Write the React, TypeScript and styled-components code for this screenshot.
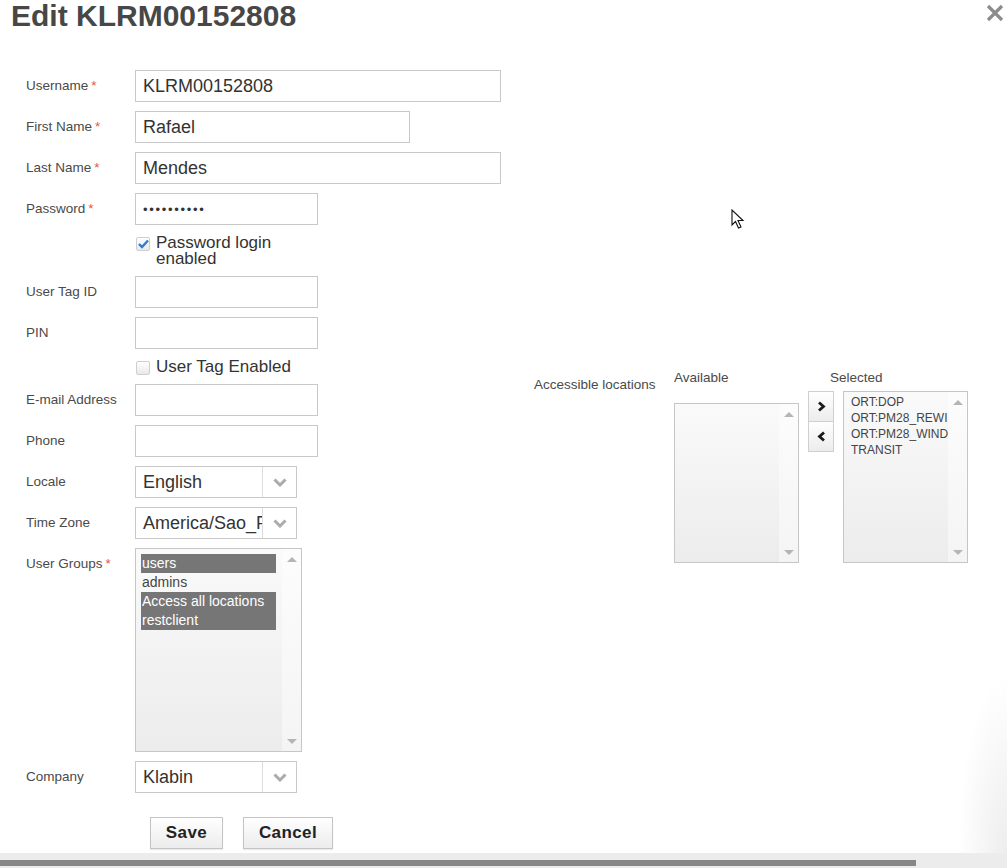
import styled, { createGlobalStyle } from 'styled-components'

const GlobalStyle = createGlobalStyle`
  html, body {
    margin: 0;
    padding: 0;
    background: #fff;
    font-family: Arial, "Liberation Sans", sans-serif;
    overflow: hidden;
  }
`

const Page = styled.div`
  position: relative;
  width: 1007px;
  height: 868px;
  background: #fff;
  overflow: hidden;
`

const Header = styled.div`
  display: flex;
  justify-content: space-between;
  align-items: flex-start;
  padding: 0 3px 0 11px;
  height: 70px;
`

const Title = styled.h1`
  margin: 0;
  font-size: 30px;
  line-height: 32px;
  font-weight: bold;
  color: #474747;
`

const CloseBtn = styled.button`
  border: 0;
  background: none;
  padding: 0;
  margin-top: 4px;
  width: 18px;
  height: 18px;
  cursor: pointer;
`

const Body = styled.div`
  display: flex;
  align-items: flex-start;
`

const Form = styled.div`
  display: flex;
  flex-direction: column;
  gap: 9px;
  padding-left: 26px;
  width: 508px;
  flex-shrink: 0;
`

const Row = styled.div`
  display: grid;
  grid-template-columns: 109px auto;
  align-items: start;
`

const Label = styled.div`
  font-size: 13.5px;
  line-height: 32px;
  color: #4a4a4a;
`

const Req = styled.span`
  color: #e5533d;
  margin-left: 3px;
`

const TextInput = styled.div<{ $w: number }>`
  box-sizing: border-box;
  width: ${(p) => p.$w}px;
  height: 32px;
  border: 1px solid #c9c9c9;
  background: #fff;
  padding: 0 7px;
  font-size: 18px;
  line-height: 30px;
  color: #333;
  white-space: nowrap;
  overflow: hidden;
`

const Dots = styled.span`
  font-size: 13px;
  letter-spacing: 1.7px;
  color: #333;
  position: relative;
  top: -1px;
`

const CheckRow = styled.label<{ $h: number }>`
  display: flex;
  align-items: flex-start;
  gap: 6px;
  height: ${(p) => p.$h}px;
  padding-top: 1px;
  box-sizing: border-box;
`

const Box = styled.span`
  box-sizing: border-box;
  width: 14px;
  height: 14px;
  margin: 2px 0 0 1px;
  border: 1px solid #cfcfcf;
  border-radius: 2px;
  background: linear-gradient(#fff, #e9e9e9);
  display: flex;
  align-items: center;
  justify-content: center;
  flex-shrink: 0;
`

const CheckText = styled.span<{ $wrap?: boolean }>`
  font-size: 17px;
  line-height: 16px;
  color: #333;
  max-width: ${(p) => (p.$wrap ? '150px' : 'none')};
  white-space: ${(p) => (p.$wrap ? 'normal' : 'nowrap')};
`

const Select = styled.div`
  box-sizing: border-box;
  display: flex;
  width: 162px;
  height: 32px;
  border: 1px solid #c9c9c9;
  background: #fff;
`

const SelectValue = styled.div`
  flex: 1;
  min-width: 0;
  padding: 0 7px;
  font-size: 18px;
  line-height: 30px;
  color: #333;
  white-space: nowrap;
  overflow: hidden;
`

const SelectArrow = styled.div`
  width: 33px;
  border-left: 1px solid #dcdcdc;
  display: flex;
  align-items: center;
  justify-content: center;
`

const ListBox = styled.div<{ $w: number; $h: number }>`
  box-sizing: border-box;
  width: ${(p) => p.$w}px;
  height: ${(p) => p.$h}px;
  border: 1px solid #c6c6c6;
  background: linear-gradient(#fafafa, #ececec);
  display: flex;
  overflow: hidden;
`

const ListItems = styled.div<{ $pad: string; $size: number; $lh: number }>`
  flex: 1;
  min-width: 0;
  padding: ${(p) => p.$pad};
  font-size: ${(p) => p.$size}px;
  line-height: ${(p) => p.$lh}px;
  color: #444;
  overflow: hidden;
`

const Item = styled.div<{ $sel?: boolean }>`
  white-space: nowrap;
  overflow: hidden;
  background: ${(p) => (p.$sel ? '#767676' : 'transparent')};
  color: ${(p) => (p.$sel ? '#fff' : 'inherit')};
  padding-left: 1px;
`

const ScrollTrack = styled.div`
  width: 19px;
  flex-shrink: 0;
  background: rgba(255, 255, 255, 0.45);
  display: flex;
  flex-direction: column;
  justify-content: space-between;
  align-items: center;
  padding: 8px 0 7px;
  box-sizing: border-box;
`

const Tri = styled.span<{ $up?: boolean }>`
  width: 0;
  height: 0;
  border-left: 5px solid transparent;
  border-right: 5px solid transparent;
  ${(p) => (p.$up ? 'border-bottom: 5px solid #b5b5b5;' : 'border-top: 5px solid #b5b5b5;')}
`

const Actions = styled.div`
  display: flex;
  gap: 20px;
  padding: 15px 0 0 124px;
`

const Button = styled.button<{ $w: number }>`
  box-sizing: border-box;
  width: ${(p) => p.$w}px;
  height: 32px;
  border: 1px solid #c4c4c4;
  background: linear-gradient(#ffffff, #ececec);
  box-shadow: 0 1px 1px rgba(0, 0, 0, 0.08);
  font-family: Arial, "Liberation Sans", sans-serif;
  font-size: 17px;
  font-weight: bold;
  letter-spacing: 0.4px;
  color: #222;
  padding: 0;
`

const Locations = styled.div`
  display: grid;
  grid-template-columns: 140px 125px 9px 26px 9px 125px;
  grid-template-rows: 22px auto;
  padding-top: 299px;
`

const LocLabel = styled.div`
  grid-row: 1 / span 2;
  font-size: 13.5px;
  line-height: 18px;
  color: #4a4a4a;
  padding-top: 7px;
`

const ColHead = styled.div<{ $pad?: number; $span?: boolean }>`
  font-size: 13.5px;
  line-height: 18px;
  color: #4a4a4a;
  padding-left: ${(p) => p.$pad || 0}px;
  grid-column: ${(p) => (p.$span ? '4 / span 3' : 'auto')};
`

const AvailBox = styled.div`
  grid-column: 2;
  grid-row: 2;
  padding-top: 12px;
`

const MoveButtons = styled.div`
  grid-column: 4;
  grid-row: 2;
  display: flex;
  flex-direction: column;
  padding-top: 1px;
`

const MoveBtn = styled.button`
  box-sizing: border-box;
  width: 26px;
  height: 31px;
  margin-top: -1px;
  border: 1px solid #cfcfcf;
  background: linear-gradient(#ffffff, #ececec);
  display: flex;
  align-items: center;
  justify-content: center;
  padding: 0;
`

const SelBox = styled.div`
  grid-column: 6;
  grid-row: 2;
`

const BottomBar = styled.div`
  position: absolute;
  left: 0;
  right: 0;
  bottom: 0;
  height: 15px;
  background: #ececec;
`

const Thumb = styled.div`
  margin-top: 7px;
  width: 916px;
  height: 6px;
  background: #878787;
`

const EdgeShade = styled.div`
  position: absolute;
  right: 0;
  bottom: 15px;
  width: 50px;
  height: 180px;
  background: radial-gradient(ellipse at 100% 100%, rgba(0, 0, 0, 0.07), rgba(0, 0, 0, 0) 70%);
  pointer-events: none;
`

const Cursor = styled.svg`
  position: absolute;
  left: 731px;
  top: 209px;
`

const Chevron = () => (
  <svg width="14" height="9" viewBox="0 0 14 9">
    <path d="M1.5 1.5 L7 7 L12.5 1.5" fill="none" stroke="#ababab" strokeWidth="3" />
  </svg>
)

const Check = () => (
  <svg width="11" height="10" viewBox="0 0 11 10">
    <path d="M1 5 L4 8 L10 1.5" fill="none" stroke="#2d7bd4" strokeWidth="2.4" />
  </svg>
)

const Field = ({ label, req, children }: { label: string; req?: boolean; children: React.ReactNode }) => (
  <Row>
    <Label>
      {label}
      {req && <Req>*</Req>}
    </Label>
    {children}
  </Row>
)

const Scroll = () => (
  <ScrollTrack>
    <Tri $up />
    <Tri />
  </ScrollTrack>
)

export default function App() {
  return (
    <Page>
      <GlobalStyle />
      <Header>
        <Title>Edit KLRM00152808</Title>
        <CloseBtn aria-label="close">
          <svg width="18" height="18" viewBox="0 0 18 18">
            <path d="M2 2 L16 16 M16 2 L2 16" stroke="#8c8c8c" strokeWidth="3.2" />
          </svg>
        </CloseBtn>
      </Header>
      <Body>
        <Form>
          <Field label="Username" req>
            <TextInput $w={366}>KLRM00152808</TextInput>
          </Field>
          <Field label="First Name" req>
            <TextInput $w={275}>Rafael</TextInput>
          </Field>
          <Field label="Last Name" req>
            <TextInput $w={366}>Mendes</TextInput>
          </Field>
          <Field label="Password" req>
            <TextInput $w={183}>
              <Dots>••••••••••</Dots>
            </TextInput>
          </Field>
          <Row>
            <span />
            <CheckRow $h={33}>
              <Box>
                <Check />
              </Box>
              <CheckText $wrap>Password login enabled</CheckText>
            </CheckRow>
          </Row>
          <Field label="User Tag ID">
            <TextInput $w={183} />
          </Field>
          <Field label="PIN">
            <TextInput $w={183} />
          </Field>
          <Row>
            <span />
            <CheckRow $h={17}>
              <Box />
              <CheckText>User Tag Enabled</CheckText>
            </CheckRow>
          </Row>
          <Field label="E-mail Address">
            <TextInput $w={183} />
          </Field>
          <Field label="Phone">
            <TextInput $w={183} />
          </Field>
          <Field label="Locale">
            <Select>
              <SelectValue>English</SelectValue>
              <SelectArrow>
                <Chevron />
              </SelectArrow>
            </Select>
          </Field>
          <Field label="Time Zone">
            <Select>
              <SelectValue>America/Sao_Paulo</SelectValue>
              <SelectArrow>
                <Chevron />
              </SelectArrow>
            </Select>
          </Field>
          <Field label="User Groups" req>
            <ListBox $w={167} $h={204}>
              <ListItems $pad="5px 6px 0 5px" $size={14} $lh={19}>
                <Item $sel>users</Item>
                <Item>admins</Item>
                <Item $sel>Access all locations</Item>
                <Item $sel>restclient</Item>
              </ListItems>
              <Scroll />
            </ListBox>
          </Field>
          <Field label="Company">
            <Select>
              <SelectValue>Klabin</SelectValue>
              <SelectArrow>
                <Chevron />
              </SelectArrow>
            </Select>
          </Field>
          <Actions>
            <Button $w={73}>Save</Button>
            <Button $w={90}>Cancel</Button>
          </Actions>
        </Form>
        <Locations>
          <LocLabel>Accessible locations</LocLabel>
          <ColHead>Available</ColHead>
          <ColHead $pad={22} $span>
            Selected
          </ColHead>
          <AvailBox>
            <ListBox $w={125} $h={160}>
              <ListItems $pad="2px 0 0 6px" $size={12} $lh={16} />
              <Scroll />
            </ListBox>
          </AvailBox>
          <MoveButtons>
            <MoveBtn aria-label="add">
              <svg width="9" height="11" viewBox="0 0 9 11">
                <path d="M2 1.5 L6.5 5.5 L2 9.5" fill="none" stroke="#1a1a1a" strokeWidth="2.8" />
              </svg>
            </MoveBtn>
            <MoveBtn aria-label="remove">
              <svg width="9" height="11" viewBox="0 0 9 11">
                <path d="M7 1.5 L2.5 5.5 L7 9.5" fill="none" stroke="#1a1a1a" strokeWidth="2.8" />
              </svg>
            </MoveBtn>
          </MoveButtons>
          <SelBox>
            <ListBox $w={125} $h={172}>
              <ListItems $pad="2px 0 0 6px" $size={12} $lh={16}>
                <Item>ORT:DOP</Item>
                <Item>ORT:PM28_REWIND</Item>
                <Item>ORT:PM28_WINDER</Item>
                <Item>TRANSIT</Item>
              </ListItems>
              <Scroll />
            </ListBox>
          </SelBox>
        </Locations>
      </Body>
      <Cursor width="14" height="22" viewBox="0 0 14 22">
        <path d="M1 1 L1 16 L4.5 12.5 L7.5 19 L10 18 L7 11.5 L12 11.5 Z" fill="#fff" stroke="#111" strokeWidth="1.1" />
      </Cursor>
      <EdgeShade />
      <BottomBar>
        <Thumb />
      </BottomBar>
    </Page>
  )
}
